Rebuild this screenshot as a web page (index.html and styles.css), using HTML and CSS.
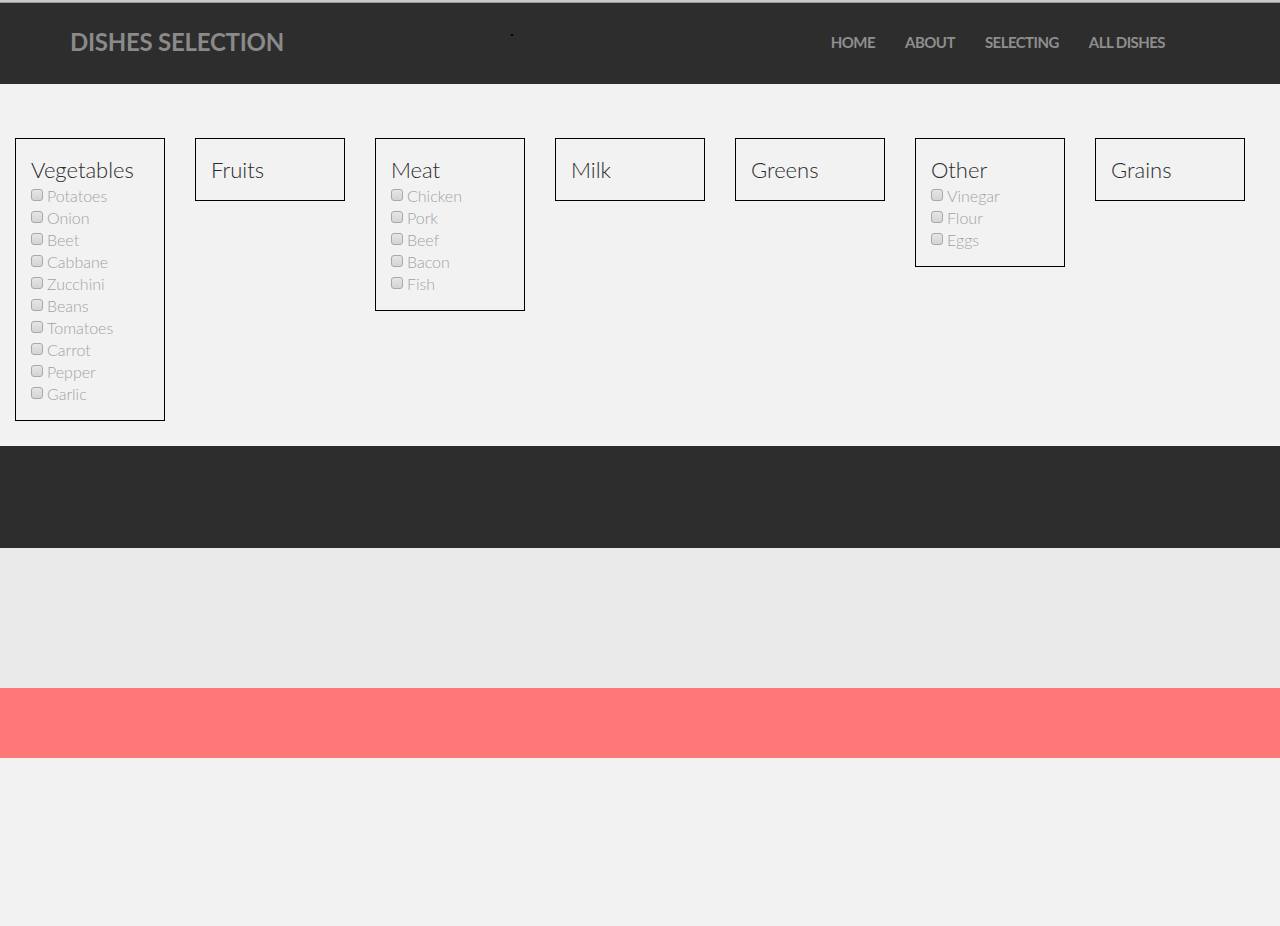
FILE: index.html
```html
<!DOCTYPE html>
<html lang="en">
<head>
<meta charset="utf-8">
<title>Dishes Selection</title>
<link rel="stylesheet" href="styles.css">
</head>
<body>
<div class="topline"></div>
<header class="header">
  <div class="brand">DISHES SELECTION</div>
  <span class="dot"></span>
  <nav class="nav">
    <a href="#">HOME</a>
    <a href="#">ABOUT</a>
    <a href="#">SELECTING</a>
    <a href="#">ALL DISHES</a>
  </nav>
</header>
<main class="main">
  <div class="group">
    <div class="group-title">Vegetables</div>
    <label class="item"><input type="checkbox">Potatoes</label>
    <label class="item"><input type="checkbox">Onion</label>
    <label class="item"><input type="checkbox">Beet</label>
    <label class="item"><input type="checkbox">Cabbane</label>
    <label class="item"><input type="checkbox">Zucchini</label>
    <label class="item"><input type="checkbox">Beans</label>
    <label class="item"><input type="checkbox">Tomatoes</label>
    <label class="item"><input type="checkbox">Carrot</label>
    <label class="item"><input type="checkbox">Pepper</label>
    <label class="item"><input type="checkbox">Garlic</label>
  </div>
  <div class="group">
    <div class="group-title">Fruits</div>
  </div>
  <div class="group">
    <div class="group-title">Meat</div>
    <label class="item"><input type="checkbox">Chicken</label>
    <label class="item"><input type="checkbox">Pork</label>
    <label class="item"><input type="checkbox">Beef</label>
    <label class="item"><input type="checkbox">Bacon</label>
    <label class="item"><input type="checkbox">Fish</label>
  </div>
  <div class="group">
    <div class="group-title">Milk</div>
  </div>
  <div class="group">
    <div class="group-title">Greens</div>
  </div>
  <div class="group">
    <div class="group-title">Other</div>
    <label class="item"><input type="checkbox">Vinegar</label>
    <label class="item"><input type="checkbox">Flour</label>
    <label class="item"><input type="checkbox">Eggs</label>
  </div>
  <div class="group">
    <div class="group-title">Grains</div>
  </div>
</main>
<section class="band-dark"></section>
<section class="band-light"></section>
<section class="band-pink"></section>
<footer class="bottom"></footer>
</body>
</html>
```

FILE: styles.css
```css
* { box-sizing: border-box; }
html, body { margin: 0; padding: 0; }
body {
  background: #f2f2f2;
  font-family: Lato, "Open Sans", sans-serif;
}
.topline {
  height: 3px;
  background: #c9c9c9;
  border-bottom: 1px solid #9a9a9a;
}
.header {
  position: relative;
  height: 81px;
  background: #2d2d2d;
  display: flex;
  align-items: center;
  justify-content: space-between;
  padding: 0 115px 4px 70px;
}
.brand {
  color: #8a8a8a;
  font-weight: 700;
  font-size: 24px;
  letter-spacing: -0.25px;
}
.dot {
  position: absolute;
  left: 511px;
  top: 31px;
  width: 2px;
  height: 2px;
  background: #000;
}
.nav {
  display: flex;
  gap: 30px;
}
.nav a {
  color: #8e8e8e;
  font-weight: 700;
  font-size: 15px;
  letter-spacing: -0.55px;
  text-decoration: none;
}
.main {
  height: 362px;
  display: flex;
  align-items: flex-start;
  gap: 30px;
  padding: 54px 15px 0;
}
.group {
  width: 150px;
  border: 1px solid #000;
  padding: 15px;
  display: flex;
  flex-direction: column;
}
.group-title {
  font-weight: 300;
  font-size: 22px;
  line-height: 31px;
  color: #2a2a2a;
}
.item {
  display: flex;
  align-items: center;
  height: 22px;
  padding-bottom: 2px;
  font-weight: 300;
  font-size: 16px;
  color: #a2a2a2;
}
.item input {
  -webkit-appearance: none;
  appearance: none;
  width: 12px;
  height: 12px;
  margin: 0 4px 0 0;
  border: 1px solid #a8a8a8;
  border-radius: 3px;
  background: linear-gradient(#e6e6e6, #d4d4d4);
  flex: none;
}
.band-dark {
  height: 102px;
  background: #2d2d2d;
}
.band-light {
  height: 140px;
  background: #eaeaea;
}
.band-pink {
  height: 70px;
  background: #ff7878;
}
.bottom {
  height: 168px;
  background: #f2f2f2;
}
```
